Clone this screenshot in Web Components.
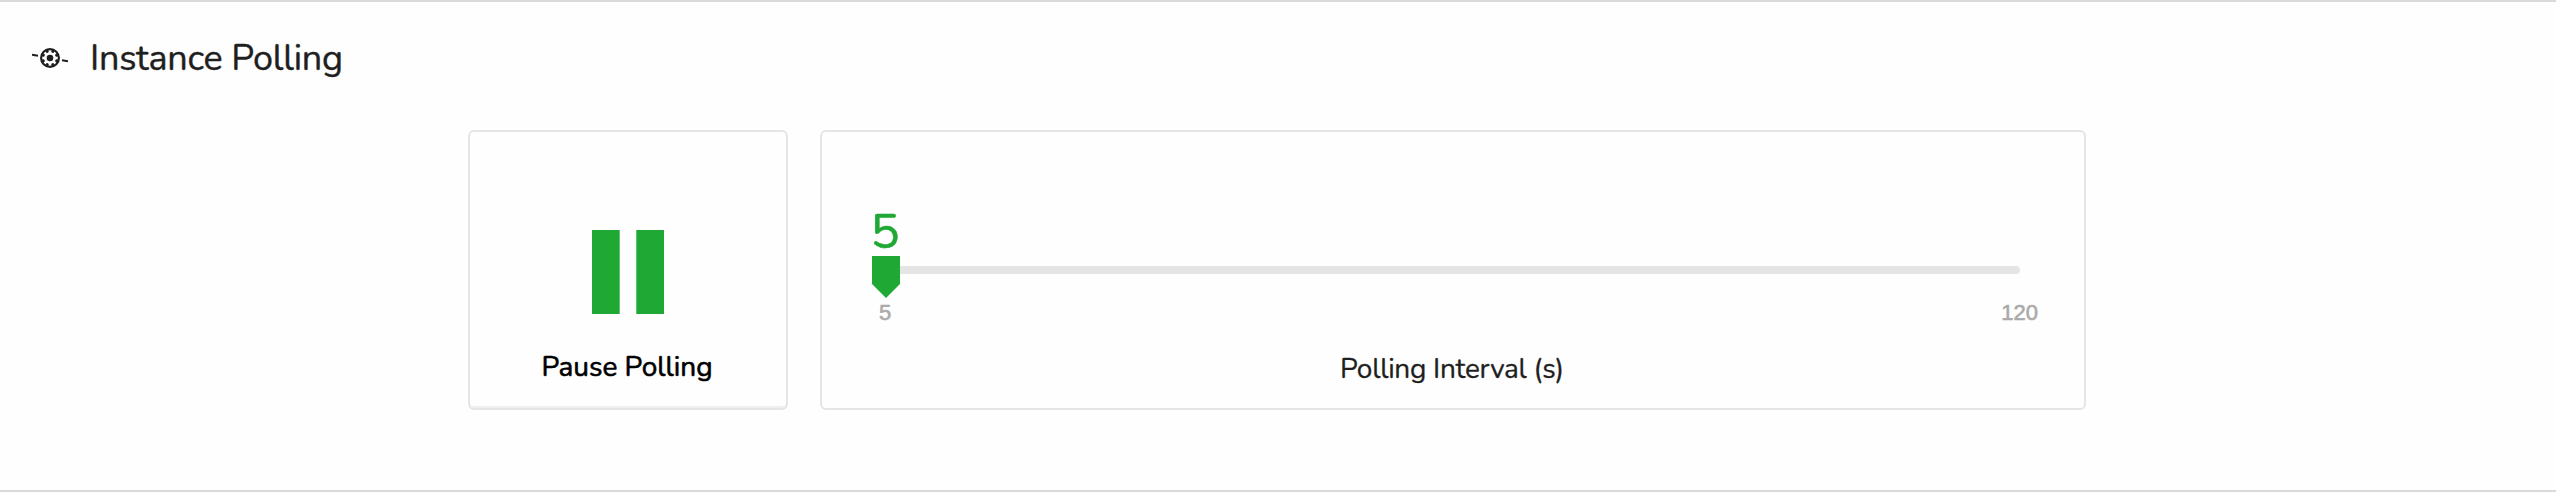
<!DOCTYPE html>
<html lang="en"><head><meta charset="utf-8"><title>Instance Polling</title>
<style>body{margin:0;background:#fefefe;font-family:Nunito,Lato,sans-serif;color:#1f1f1f}</style></head>
<body>
<polling-section heading="Instance Polling">
  <pause-card label="Pause Polling"></pause-card>
  <interval-card value="5" min="5" max="120" label="Polling Interval (s)"></interval-card>
</polling-section>
<script>
class BaseElement extends HTMLElement{
  constructor(){super();this.attachShadow({mode:'open'}).innerHTML=this.render(n=>this.getAttribute(n));}
}
customElements.define('polling-icon',class extends BaseElement{
  render(){
    const teeth=[0,45,90,135,180,225,270,315].map(a=>`<circle cx="18" cy="6.8" r="1.5" transform="rotate(${a+22.5} 18 14)"/>`).join('');
    return `<style>:host{display:block;width:36px;height:28px}svg{display:block}</style>
    <svg width="36" height="28" viewBox="0 0 36 28" fill="#1f1f1f"><circle cx="18" cy="14" r="8.9" fill="none" stroke="#1f1f1f" stroke-width="2.2"/>${teeth}<circle cx="18" cy="14" r="3.3"/><path d="M0 10.8l6 1M30 16.2l6 1" stroke="#1f1f1f" stroke-width="2"/></svg>`;
  }
});
customElements.define('polling-section',class extends BaseElement{
  render(a){return `<style>
    :host{display:block;box-sizing:border-box;height:492px;border:solid #dadada;border-width:2px 0}
    header{display:flex;align-items:center;gap:20px;height:60px;padding:26px 0 0 32px;box-sizing:content-box}
    h2{margin:2px 0 0 2px;font-size:36px;line-height:44px;font-weight:400;letter-spacing:-.26px;-webkit-text-stroke:.4px;white-space:nowrap}
    main{display:flex;gap:32px;margin:42px 0 0 468px}
    </style><header><polling-icon></polling-icon><h2>${a('heading')}</h2></header><main><slot></slot></main>`;}
});
customElements.define('pause-card',class extends BaseElement{
  render(a){return `<style>
    :host{display:flex;flex-direction:column;align-items:center;box-sizing:border-box;width:320px;height:280px;border:2px solid #e5e5e5;border-radius:6px;box-shadow:inset 0 -2px #f0f0f0;padding-top:98px}
    svg{display:block}
    span{margin:35px 2px 0 0;font-size:28px;line-height:36px;color:#000;-webkit-text-stroke:.6px #000;white-space:nowrap}
    </style><svg width="72" height="84" fill="#20a835"><path d="M0 0h27.7v84H0zM44.3 0H72v84H44.3z"/></svg><span>${a('label')}</span>`;}
});
customElements.define('interval-card',class extends BaseElement{
  render(a){return `<style>
    :host{display:block;box-sizing:border-box;width:1266px;height:280px;border:2px solid #e5e5e5;border-radius:6px;padding:72px 30px 0 50px}
    .value{display:flex;justify-content:center;width:26px;height:52px;font-size:49px;line-height:56px;color:#20a835;-webkit-text-stroke:.5px}
    .track{display:flex;align-items:flex-start;height:44px;width:1148px}
    .thumb{display:block;flex:none}
    .bar{flex:1;height:8px;margin-top:10px;background:#e5e5e5;border-radius:0 4px 4px 0}
    .scale{display:flex;justify-content:space-between;height:24px;padding:0 16px 0 7px;font:22px/25px "Liberation Sans",sans-serif;color:#aaa;-webkit-text-stroke:.6px #aaa}
    .label{margin:27px -20px 0 -42px;font-size:28px;line-height:36px;letter-spacing:-.28px;-webkit-text-stroke:.3px;text-align:center;white-space:nowrap}
    </style><div class="value">${a('value')}</div>
    <div class="track"><svg class="thumb" width="28" height="42" fill="#20a835"><path d="M0 0h28v28L14 42 0 28z"/></svg><div class="bar"></div></div>
    <div class="scale"><span>${a('min')}</span><span>${a('max')}</span></div><div class="label">${a('label')}</div>`;}
});
</script></body></html>
